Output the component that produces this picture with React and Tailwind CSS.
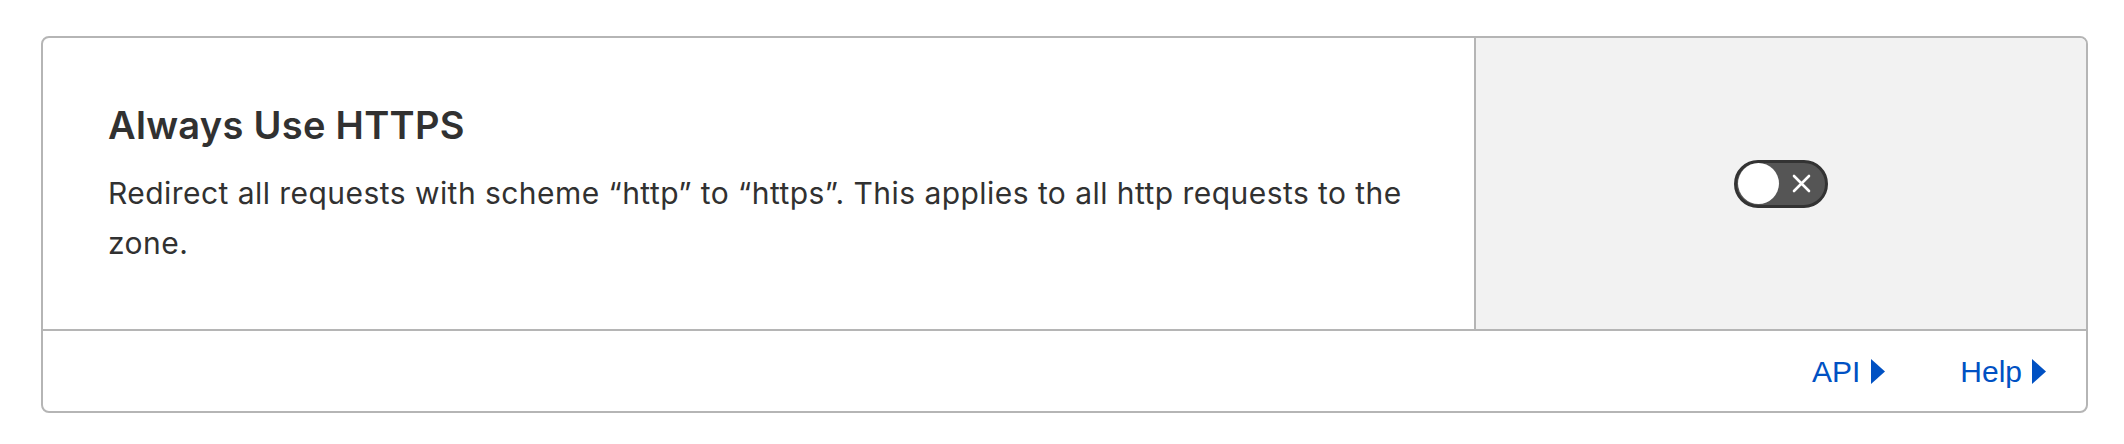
import React from "react";

const Arrow = () => (
  <svg width="14" height="25" viewBox="0 0 14 25" className="shrink-0">
    <polygon points="0,0 14,12.5 0,25" fill="#0051c3" />
  </svg>
);

export default function App() {
  return (
    <div className="w-[2124px] h-[444px] bg-white pt-[36px] pl-[41px] pr-[36px]">
      <div className="border-2 border-[#b5b5b5] rounded-[8px] overflow-hidden bg-white">
        {/* Setting row */}
        <div className="flex border-b-2 border-[#b5b5b5]">
          <div className="w-[1431px] pl-[65px] pr-[40px] pt-[66px] pb-[61px] font-['Inter',sans-serif] text-[#313131]">
            <h2 className="text-[38px] leading-[43px] font-semibold tracking-[0.3px]">Always Use HTTPS</h2>
            <p className="mt-[21px] text-[30px] leading-[50px] tracking-[0.45px]">
              Redirect all requests with scheme “http” to “https”. This applies to all http requests to the zone.
            </p>
          </div>
          <div className="flex-1 border-l-2 border-[#b5b5b5] bg-[#f2f2f2] flex items-center justify-center">
            {/* toggle, off */}
            <button className="w-[94px] h-[48px] rounded-full border-[3px] border-[#333] bg-[#555] flex items-center px-[1px] relative">
              <span className="w-[41px] h-[41px] rounded-full bg-white block" />
              <svg width="19" height="19" viewBox="0 0 19 19" className="absolute left-[55px] top-[11px]">
                <path d="M2 2 L17 17 M17 2 L2 17" stroke="#fff" strokeWidth="2.6" strokeLinecap="round" />
              </svg>
            </button>
          </div>
        </div>

        {/* Footer links */}
        <div className="h-[80px] flex items-center justify-end pr-[40px] font-['Liberation_Sans',Arial,sans-serif] text-[30px] text-[#0051c3]">
          <a className="flex items-center gap-[11px]">
            <span>API</span>
            <Arrow />
          </a>
          <a className="flex items-center gap-[10px] ml-[75px]">
            <span>Help</span>
            <Arrow />
          </a>
        </div>
      </div>
    </div>
  );
}
